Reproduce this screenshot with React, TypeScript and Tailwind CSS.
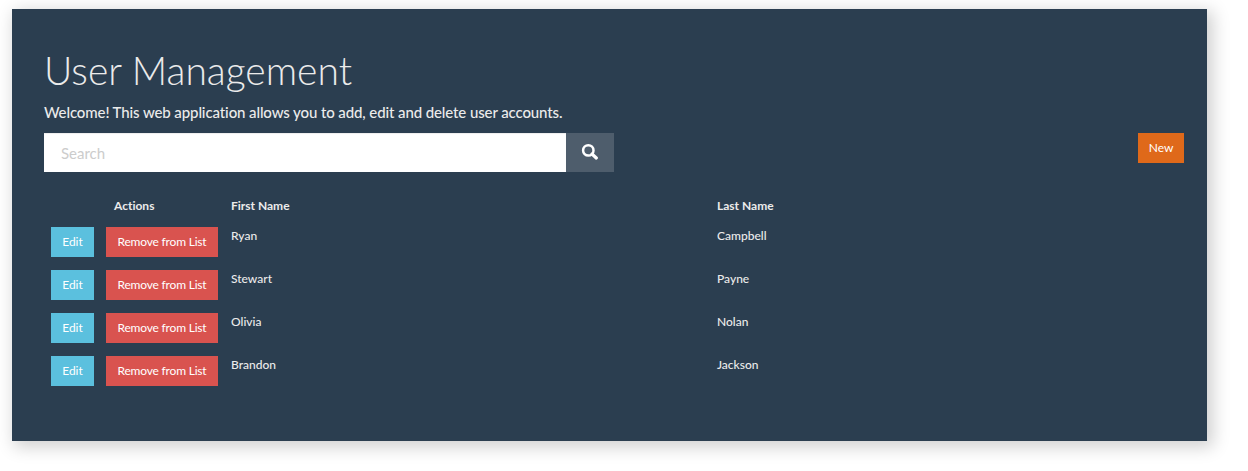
const users = [
  ["Ryan", "Campbell"],
  ["Stewart", "Payne"],
  ["Olivia", "Nolan"],
  ["Brandon", "Jackson"],
];

const rowGrid = "grid grid-cols-[187px_486px_1fr]";

export default function App() {
  return (
    <div className="h-[471px] overflow-hidden bg-white pl-3 pt-[9px] font-['Lato',sans-serif] text-[#ebebeb] [font-variant-ligatures:none]">
      <main className="h-[432px] w-[1195px] bg-[#2b3e50] pl-8 pr-[23px] pt-[37px] shadow-[4px_4px_16px_2px_rgba(0,0,0,0.19)]">
        <h1 className="h-12 text-[39px] font-light leading-[48px]">User Management</h1>
        <p className="mt-[7px] h-[22px] text-[15px] font-medium leading-[22px] tracking-[-0.108px]">
          Welcome! This web application allows you to add, edit and delete user accounts.
        </p>
        <div className="mt-2.5 flex items-start justify-between">
          <form className="flex h-[39px]">
            <input
              type="text"
              placeholder="Search"
              className="w-[522px] bg-white px-[17px] pt-0.5 text-[15px] text-[#2b3e50] shadow-[inset_0_1px_1px_rgba(0,0,0,0.075)] outline-none placeholder:text-[#cccccc]"
            />
            <button type="button" aria-label="Search" className="flex w-12 items-start bg-[#4e5d6c] pl-[15px] pt-2.5">
              <svg className="h-[17px] w-[18px]" viewBox="0 0 18 17" fill="none" stroke="#fff">
                <circle cx="7.3" cy="7.4" r="5.2" strokeWidth="2.5" />
                <path d="M11 11l4.3 4" strokeWidth="3.2" strokeLinecap="round" />
              </svg>
            </button>
          </form>
          <button className="h-[30px] w-[46px] bg-[#df691a] text-xs text-white">New</button>
        </div>
        <div className="mt-[21px] text-xs leading-[18px]">
          <div className={`${rowGrid} h-[34px] pt-1 font-bold`}>
            <span className="pl-[70px]">Actions</span>
            <span>First Name</span>
            <span>Last Name</span>
          </div>
          {users.map(([first, last]) => (
            <div key={first} className={`${rowGrid} h-[43px] font-medium`}>
              <div className="flex gap-3 pl-[7px] font-normal">
                <button className="h-[30px] w-[43px] bg-[#5bc0de] text-white">Edit</button>
                <button className="h-[30px] w-28 whitespace-nowrap bg-[#d9534f] tracking-[-0.19px] text-white">Remove from List</button>
              </div>
              <span>{first}</span>
              <span>{last}</span>
            </div>
          ))}
        </div>
      </main>
    </div>
  );
}
